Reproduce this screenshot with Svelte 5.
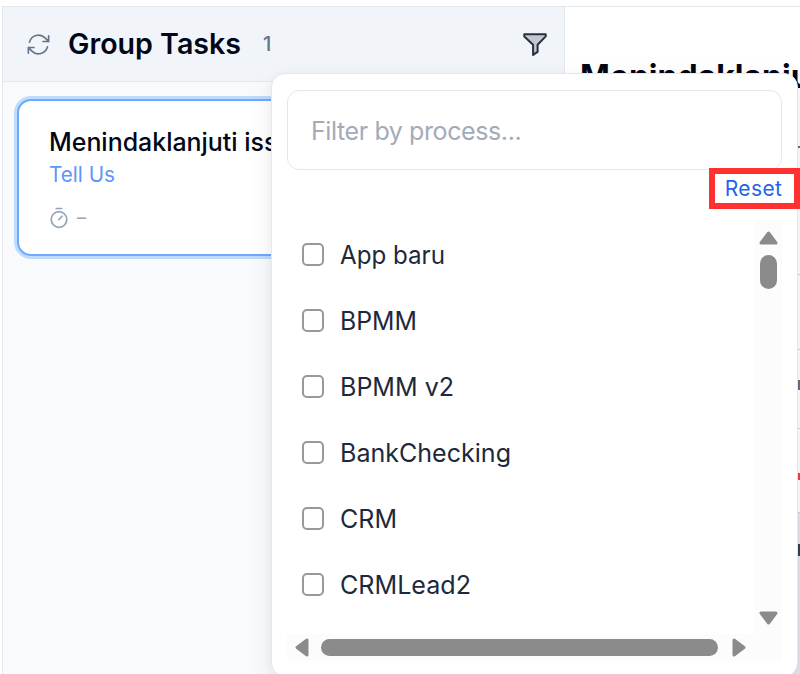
<script>
	let query = '';
	let processes = [
		{ name: 'App baru', width: 105, checked: false },
		{ name: 'BPMM', width: 77, checked: false },
		{ name: 'BPMM v2', width: 114, checked: false },
		{ name: 'BankChecking', width: 171, checked: false },
		{ name: 'CRM', width: 57, checked: false },
		{ name: 'CRMLead2', width: 131, checked: false }
	];

	// rows of the task detail, mostly covered by the filter menu
	const rows = [
		{ height: 152, mark: 23, size: 2, color: '#64748b' },
		{ height: 75 },
		{ height: 79, mark: 30, size: 10, color: '#64748b' },
		{ height: 84, mark: 44, size: 7, color: '#ef4444' },
		{ height: 170, mark: 31, size: 12, color: '#334155', shaded: true }
	];

	function reset() {
		query = '';
		processes = processes.map((p) => ({ ...p, checked: false }));
	}
</script>

<div class="page">
	<section class="tasks">
		<header class="tasks__header">
			<svg class="tasks__refresh" viewBox="0 0 24 24">
				<path d="M16.02 9.35h4.99V4.36M2.99 19.64v-4.99h4.99M2.99 14.65l3.18 3.18A8.25 8.25 0 0 0 19.97 14.13M4.03 9.87A8.25 8.25 0 0 1 17.83 6.17l3.18 3.18" />
			</svg>
			<svg class="tasks__title" width="173" height="36"><text y="28" textLength="173" lengthAdjust="spacingAndGlyphs">Group Tasks</text></svg>
			<span class="tasks__count">1</span>
			<svg class="tasks__filter" viewBox="0 0 26 26">
				<path d="M2.3 3.2h21.4v2.2l-8.1 8.3v7.2l-4.5 3V13.7L2.3 5.4Z" />
			</svg>
		</header>
		<article class="card">
			<svg class="card__title" width="300" height="32"><text y="24" textLength="258" lengthAdjust="spacingAndGlyphs">Menindaklanjuti issue</text></svg>
			<svg class="card__process" width="66" height="28"><text y="22" textLength="66" lengthAdjust="spacingAndGlyphs">Tell Us</text></svg>
			<div class="card__due">
				<svg viewBox="0 0 20 24">
					<circle cx="10" cy="13.5" r="7.8" />
					<path d="M7.3 2.5h5.4M9.8 13.7l3.2-3.5" />
				</svg>
				<span>–</span>
			</div>
		</article>
	</section>

	<section class="detail">
		<h1>
			<svg width="200" height="42"><text y="32" textLength="251" lengthAdjust="spacingAndGlyphs">Menindaklanjuti</text></svg>
		</h1>
		{#each rows as row}
			<div class="detail__row" class:shaded={row.shaded} style="height: {row.height}px">
				{#if row.mark}
					<i style="margin-top: {row.mark}px; height: {row.size}px; background: {row.color}"></i>
				{/if}
			</div>
		{/each}
	</section>

	<div class="menu">
		<input class="menu__search" placeholder="Filter by process..." bind:value={query} />
		<button class="menu__reset" on:click={reset}>Reset</button>
		<div class="menu__body">
			<div class="menu__list">
				{#each processes as process}
					<label>
						<input type="checkbox" bind:checked={process.checked} />
						<svg width={process.width} height="34">
							<text y="27" textLength={process.width} lengthAdjust="spacingAndGlyphs">{process.name}</text>
						</svg>
					</label>
				{/each}
			</div>
			<div class="bar bar--y">
				<svg width="19" height="14" viewBox="0 0 19 14"><path d="M9.5 2 17 12H2Z" /></svg>
				<span class="thumb"></span>
				<svg class="end" width="19" height="14" viewBox="0 0 19 14"><path d="M2 2h15l-7.5 10Z" /></svg>
			</div>
			<div class="bar bar--x">
				<svg width="14" height="19" viewBox="0 0 14 19"><path d="M12 2v15L2 9.5Z" /></svg>
				<span class="thumb"></span>
				<svg class="right" width="14" height="19" viewBox="0 0 14 19"><path d="m2 2 10 7.5L2 17Z" /></svg>
			</div>
		</div>
	</div>
</div>

<style>
	:global(body) {
		overflow: hidden;
		background: #fff;
	}
	.page {
		position: relative;
		display: flex;
		box-sizing: border-box;
		width: 800px;
		height: 674px;
		padding: 6px 0 0 2px;
		overflow: hidden;
		font-family: Inter, 'Liberation Sans', sans-serif;
		color: #020617;
	}
	svg {
		display: block;
		flex: none;
		overflow: visible;
	}
	text {
		fill: currentColor;
	}
	.tasks {
		box-sizing: border-box;
		width: 563px;
		flex: none;
		border: solid #e2e8f0;
		border-width: 1px 1px 0;
		background: #f8fafc;
	}
	.tasks__header {
		display: flex;
		align-items: center;
		height: 74px;
		padding: 0 16px 0 24px;
		border-bottom: 1px solid #e2e8f0;
		background: #f1f5f9;
	}
	.tasks__refresh {
		width: 27px;
		height: 27px;
		margin-right: 16px;
		margin-left: -2px;
		fill: none;
		stroke: #64748b;
		stroke-width: 1.5;
		stroke-linecap: round;
		stroke-linejoin: round;
	}
	.tasks__title {
		font-size: 28px;
		font-weight: 600;
	}
	.tasks__count {
		margin: 0 auto 0 22px;
		color: #64748b;
		font-size: 20px;
		font-weight: 500;
	}
	.tasks__filter {
		width: 26px;
		height: 26px;
		fill: #c2c7d0;
		stroke: #292f3d;
		stroke-width: 2;
		stroke-linejoin: round;
	}
	.card {
		box-sizing: border-box;
		height: 157px;
		margin: 17px 15px 0 14px;
		padding: 26px 30px;
		border: 2px solid #6caafa;
		border-radius: 14px;
		background: #fff;
		box-shadow: 0 0 0 3px #bfdbfe;
	}
	.card__title {
		font-size: 25px;
		font-weight: 500;
	}
	.card__process {
		margin-top: 1px;
		color: #6095f8;
		font-size: 21px;
	}
	.card__due {
		display: flex;
		align-items: center;
		gap: 8px;
		margin-top: 18px;
		color: #94a3b8;
		font-size: 18px;
		line-height: 24px;
	}
	.card__due svg {
		width: 20px;
		height: 24px;
		fill: none;
		stroke: #94a3b8;
		stroke-width: 1.7;
		stroke-linecap: round;
	}
	.detail {
		flex: 1;
		min-width: 0;
		border-top: 1px solid #e2e8f0;
	}
	.detail h1 {
		box-sizing: border-box;
		height: 116px;
		margin: 0;
		padding: 49px 0 0 15px;
		font-size: 33px;
		font-weight: 700;
	}
	.detail__row {
		box-sizing: border-box;
		overflow: hidden;
		border-bottom: 1px solid #cbd5e1;
	}
	.detail__row.shaded {
		background: #e2e8f0;
	}
	.detail__row i {
		display: block;
		width: 2px;
		margin-left: auto;
	}
	.menu {
		position: absolute;
		top: 73px;
		left: 271px;
		box-sizing: border-box;
		width: 527px;
		height: 604px;
		padding: 16px 15px 0;
		border: 1px solid #e2e8f0;
		border-radius: 14px;
		background: #fff;
		box-shadow: 0 10px 28px rgba(15, 23, 42, 0.08), 0 3px 8px rgba(15, 23, 42, 0.04);
	}
	.menu__search {
		display: block;
		box-sizing: border-box;
		width: 495px;
		height: 80px;
		padding: 2px 23px 0;
		border: 1.5px solid #e2e8f0;
		border-radius: 12px;
		outline: none;
		font-family: inherit;
		font-size: 25px;
		letter-spacing: -0.4px;
		color: #1e293b;
	}
	.menu__search::placeholder {
		color: #a3abb9;
	}
	.menu__reset {
		position: relative;
		display: block;
		box-sizing: border-box;
		width: 91px;
		height: 41px;
		margin: -2px -18px 0 auto;
		padding: 0 2px 0 0;
		border: 6px solid #ff3131;
		background: #fff;
		color: #2563eb;
		font-family: inherit;
		font-size: 21px;
		line-height: 30px;
		letter-spacing: 0.4px;
	}
	.menu__body {
		display: grid;
		grid-template: 413px 27px / 468px 27px;
		margin-top: 12px;
	}
	.menu__list label {
		display: flex;
		align-items: center;
		height: 66px;
		padding-left: 15px;
		color: #1e293b;
		font-size: 25px;
	}
	.menu__list input {
		box-sizing: border-box;
		width: 22px;
		height: 23px;
		margin: 0 16px 0 0;
		border: 2px solid #999;
		border-radius: 5px;
		appearance: none;
	}
	.menu__list input:checked {
		border-color: #2563eb;
		background: #2563eb;
	}
	.bar {
		display: flex;
		box-sizing: border-box;
		align-items: center;
		background: #fcfcfc;
	}
	.bar path {
		fill: #8b8b8b;
		stroke: #8b8b8b;
		stroke-width: 3;
		stroke-linejoin: round;
	}
	.thumb {
		border-radius: 9px;
		background: #8b8b8b;
	}
	.bar--y {
		flex-direction: column;
		padding: 10px 0 9px;
	}
	.bar--y .thumb {
		width: 17px;
		height: 34px;
		margin-top: 10px;
	}
	.bar--y .end {
		margin-top: auto;
	}
	.bar--x {
		grid-column: span 2;
		gap: 12px;
		padding-left: 8px;
	}
	.bar--x .thumb {
		width: 397px;
		height: 17px;
	}
	.bar--x .right {
		margin-left: 2px;
	}
</style>
